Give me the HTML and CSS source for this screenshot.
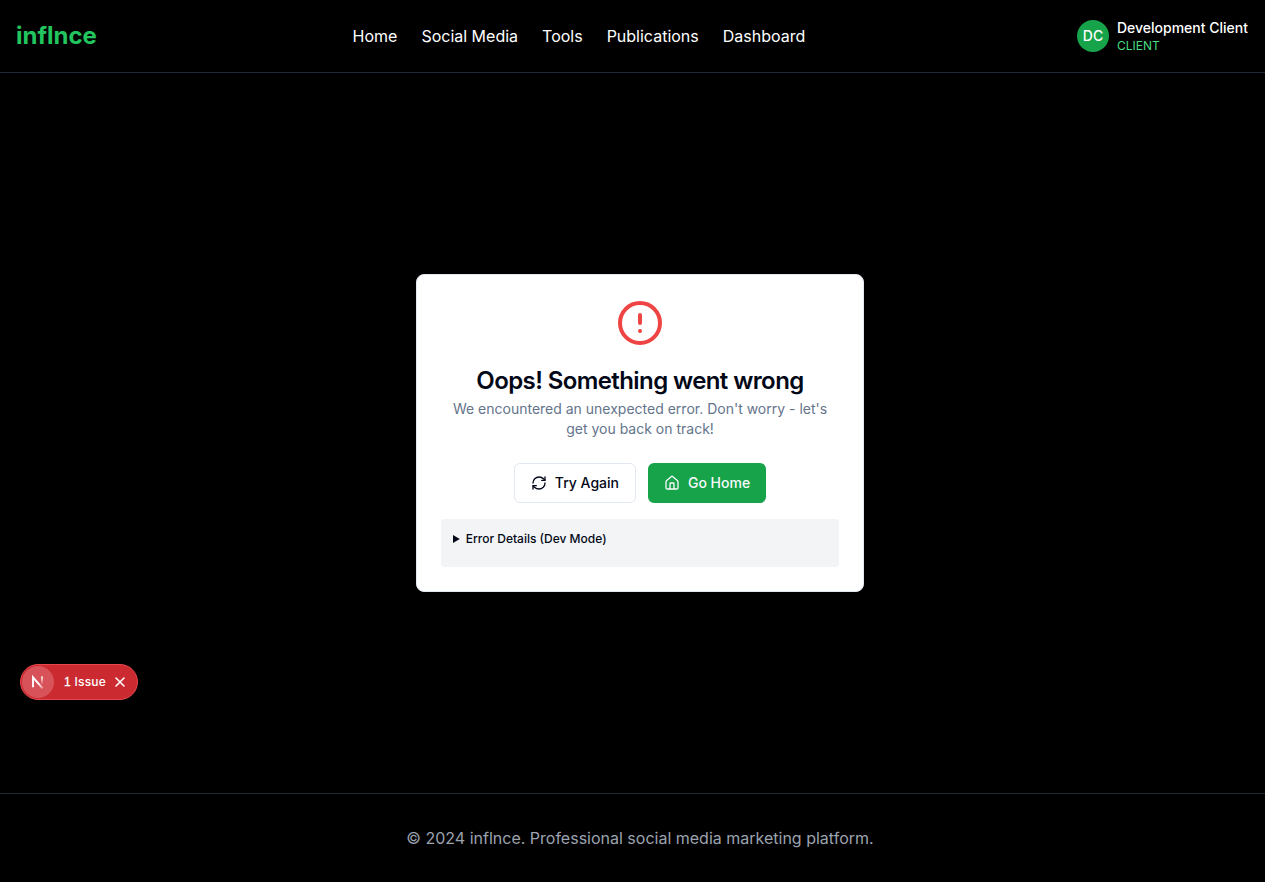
FILE: index.html
```html
<!DOCTYPE html>
<html lang="en">
<head>
<meta charset="utf-8">
<title>inflnce</title>
<link rel="stylesheet" href="styles.css">
</head>
<body>
<div class="page">
  <header class="header">
    <a class="brand">inflnce</a>
    <nav class="nav"><a>Home</a><a>Social Media</a><a>Tools</a><a>Publications</a><a>Dashboard</a></nav>
    <div class="user">
      <div class="avatar">DC</div>
      <div class="user-text"><span class="user-name">Development Client</span><span class="user-role">CLIENT</span></div>
    </div>
  </header>
  <main class="main">
    <section class="card">
      <svg class="alert" viewBox="0 0 24 24" fill="none" stroke="currentColor" stroke-width="2" stroke-linecap="round" stroke-linejoin="round"><circle cx="12" cy="12" r="10"/><path d="M12 8v4M12 16h.01"/></svg>
      <h1 class="title">Oops! Something went wrong</h1>
      <p class="description">We encountered an unexpected error. Don't worry - let's get you back on track!</p>
      <div class="actions">
        <button class="button button-outline"><svg class="icon" viewBox="0 0 24 24" fill="none" stroke="currentColor" stroke-width="2" stroke-linecap="round" stroke-linejoin="round"><path d="M3 12a9 9 0 0 1 9-9 9.75 9.75 0 0 1 6.74 2.74L21 8"/><path d="M21 3v5h-5"/><path d="M21 12a9 9 0 0 1-9 9 9.75 9.75 0 0 1-6.74-2.74L3 16"/><path d="M8 16H3v5"/></svg>Try Again</button>
        <button class="button button-primary"><svg class="icon" viewBox="0 0 24 24" fill="none" stroke="currentColor" stroke-width="2" stroke-linecap="round" stroke-linejoin="round"><path d="M15 21v-8a1 1 0 0 0-1-1h-4a1 1 0 0 0-1 1v8"/><path d="M3 10a2 2 0 0 1 .709-1.528l7-5.999a2 2 0 0 1 2.582 0l7 5.999A2 2 0 0 1 21 10v9a2 2 0 0 1-2 2H5a2 2 0 0 1-2-2z"/></svg>Go Home</button>
      </div>
      <details class="details"><summary class="summary">Error Details (Dev Mode)</summary></details>
    </section>
  </main>
  <footer class="footer">© 2024 inflnce. Professional social media marketing platform.</footer>
</div>
<div class="issue">
  <div class="issue-mark"><svg class="next" viewBox="0 0 16 16" fill="none"><defs><linearGradient id="diagonal" x1="9" y1="9" x2="13.5" y2="14.5" gradientUnits="userSpaceOnUse"><stop stop-color="#fff"/><stop offset="1" stop-color="#fff" stop-opacity="0.3"/></linearGradient><linearGradient id="stem" x1="11.5" y1="2.5" x2="11.5" y2="10.5" gradientUnits="userSpaceOnUse"><stop stop-color="#fff"/><stop offset="1" stop-color="#fff" stop-opacity="0"/></linearGradient></defs><path d="M3 13.2V3.4L12.6 14.4" stroke="url(#diagonal)" stroke-width="1.9"/><path d="M12 2.5V10.5" stroke="url(#stem)" stroke-width="1.8"/></svg></div>
  <span class="issue-label"><span class="issue-count">1</span>Issue</span>
  <svg class="close" viewBox="0 0 12 12" stroke="currentColor" stroke-width="1.6" stroke-linecap="round"><path d="M2 2l8 8M10 2l-8 8"/></svg>
</div>
</body>
</html>
```
FILE: styles.css
```css
*{box-sizing:border-box}
body{margin:0;background:#000;color:#fff;font-family:Inter,sans-serif;font-size:16px;line-height:24px;overflow:hidden}
.page{width:1265px;height:882px;display:flex;flex-direction:column}
.header{height:73px;display:flex;align-items:center;justify-content:space-between;padding:0 17px 0 16px;border-bottom:1px solid #1f2937}
.brand{font-size:24px;font-weight:700;line-height:32px;color:#22c55e}
.nav{display:flex;gap:24px;margin-right:16px}
.user{display:flex;align-items:center;gap:8px}
.avatar{width:32px;height:32px;border-radius:50%;background:#16a34a;display:flex;align-items:center;justify-content:center;font-size:14px;font-weight:500}
.user-text{display:flex;flex-direction:column}
.user-name{font-size:14px;font-weight:500;line-height:20px}
.user-role{font-size:12px;line-height:16px;color:#4ade80}
.main{flex:1;display:flex;flex-direction:column;align-items:center;padding:201px 0 0 15px}
.card{width:448px;height:318px;border:1px solid #e2e8f0;border-radius:8px;background:#fff;color:#020817;padding:24px;display:flex;flex-direction:column;align-items:center}
.alert{width:48px;height:48px;color:#ef4444;margin-bottom:16px;flex:none}
.title{margin:6px 0;font-size:24px;line-height:24px;font-weight:600;letter-spacing:-.6px}
.description{margin:0;font-size:14px;line-height:20px;color:#64748b;text-align:center}
.actions{display:flex;gap:12px;margin:24px 0 16px}
.button{height:40px;border:0;border-radius:6px;padding:0 16px;display:flex;align-items:center;gap:8px;font:500 14px/20px Inter,sans-serif}
.button-outline{border:1px solid #e2e8f0;background:#fff;color:#020817}
.button-primary{background:#16a34a;color:#f8fafc}
.icon{width:16px;height:16px}
.details{width:100%;height:48px;border-radius:4px;background:#f3f4f6;padding:12px;font-size:12px;line-height:16px}
.summary{font-weight:500}
.footer{height:89px;border-top:1px solid #1f2937;padding:32px 0 0 15px;text-align:center;color:#9ca3af}
.issue{position:fixed;left:20px;top:664px;width:118px;height:36px;border-radius:18px;background:#ca2a30;border:1px solid #e5484d;display:flex;align-items:center;padding-left:1px}
.issue-mark{width:32px;height:32px;border-radius:50%;background:#d75359;display:flex;align-items:center;justify-content:center}
.next{width:16px;height:16px}
.issue-label{display:flex;justify-content:space-between;width:42px;font-size:12px;font-weight:500;line-height:16px;margin:0 8px 0 10px;letter-spacing:.2px}
.issue-count{font-family:"Liberation Sans",sans-serif;-webkit-text-stroke:.3px #fff}
.close{width:12px;height:12px}
```
